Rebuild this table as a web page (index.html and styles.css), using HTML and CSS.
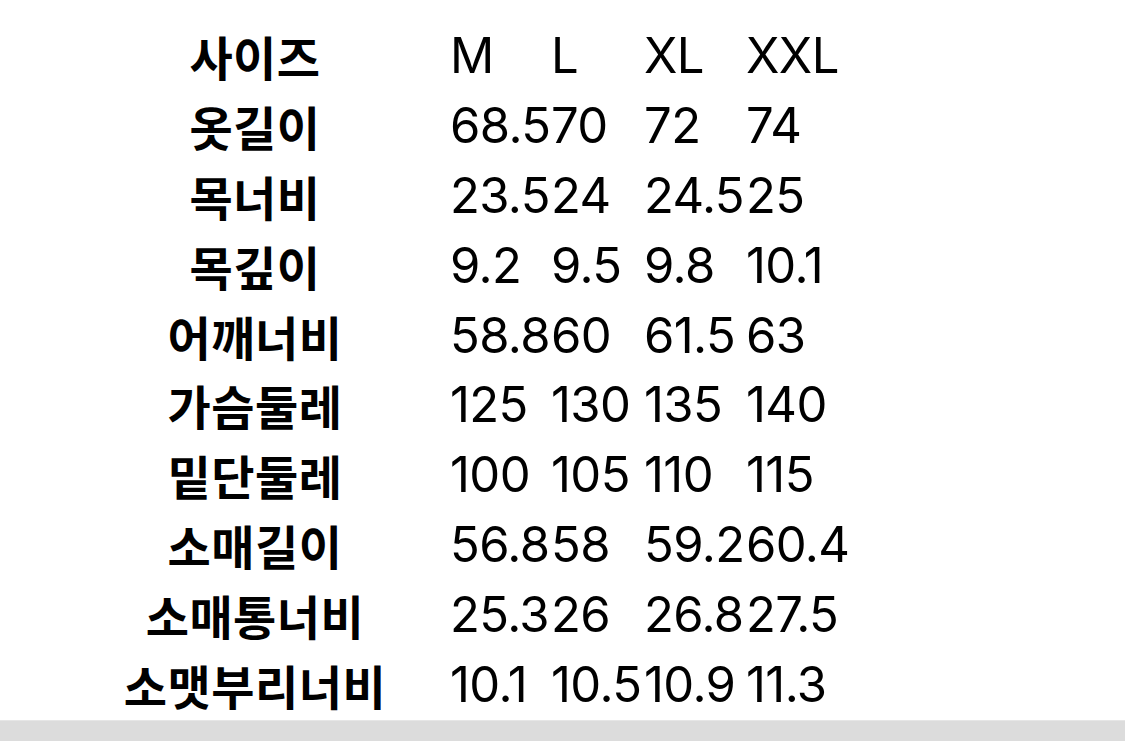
FILE: index.html
```html
<!DOCTYPE html>
<html lang="ko">
<head>
<meta charset="utf-8">
<link rel="stylesheet" href="styles.css">
</head>
<body>
<main class="sheet">
  <div class="size-table">
    <div class="label">사이즈</div><div class="val">M</div><div class="val">L</div><div class="val">XL</div><div class="val">XXL</div>
    <div class="label">옷길이</div><div class="val">68.5</div><div class="val">70</div><div class="val">72</div><div class="val">74</div>
    <div class="label">목너비</div><div class="val">23.5</div><div class="val">24</div><div class="val">24.5</div><div class="val">25</div>
    <div class="label">목깊이</div><div class="val">9.2</div><div class="val">9.5</div><div class="val">9.8</div><div class="val">10.1</div>
    <div class="label">어깨너비</div><div class="val">58.8</div><div class="val">60</div><div class="val">61.5</div><div class="val">63</div>
    <div class="label">가슴둘레</div><div class="val">125</div><div class="val">130</div><div class="val">135</div><div class="val">140</div>
    <div class="label">밑단둘레</div><div class="val">100</div><div class="val">105</div><div class="val">110</div><div class="val">115</div>
    <div class="label">소매길이</div><div class="val">56.8</div><div class="val">58</div><div class="val">59.2</div><div class="val">60.4</div>
    <div class="label">소매통너비</div><div class="val">25.3</div><div class="val">26</div><div class="val">26.8</div><div class="val">27.5</div>
    <div class="label">소맷부리너비</div><div class="val">10.1</div><div class="val">10.5</div><div class="val">10.9</div><div class="val">11.3</div>
  </div>
</main>
<footer class="bottom-bar"></footer>
</body>
</html>
```

FILE: styles.css
```css
html, body {
  margin: 0;
  padding: 0;
  background: #ffffff;
  color: #000000;
}
body {
  width: 1125px;
  height: 741px;
  overflow: hidden;
  display: flex;
  flex-direction: column;
}
.sheet {
  flex: 1;
  padding-top: 21px;
  padding-left: 105px;
}
.size-table {
  display: grid;
  grid-template-columns: 345px 101px 93px 102px 200px;
  grid-auto-rows: 69.8px;
  align-items: center;
}
.label {
  padding-right: 45px;
  text-align: center;
  font-family: "Noto Sans CJK KR", "Noto Sans", sans-serif;
  font-weight: 700;
  font-size: 47px;
  letter-spacing: 0.5px;
  line-height: 1;
  white-space: nowrap;
}
.val {
  font-family: Inter, "Liberation Sans", Arial, sans-serif;
  font-size: 49px;
  line-height: 1;
  letter-spacing: -0.6px;
  white-space: nowrap;
}
.bottom-bar {
  height: 20px;
  background: #dcdcdc;
  border-top: 1px solid #e6e6e6;
}
```
